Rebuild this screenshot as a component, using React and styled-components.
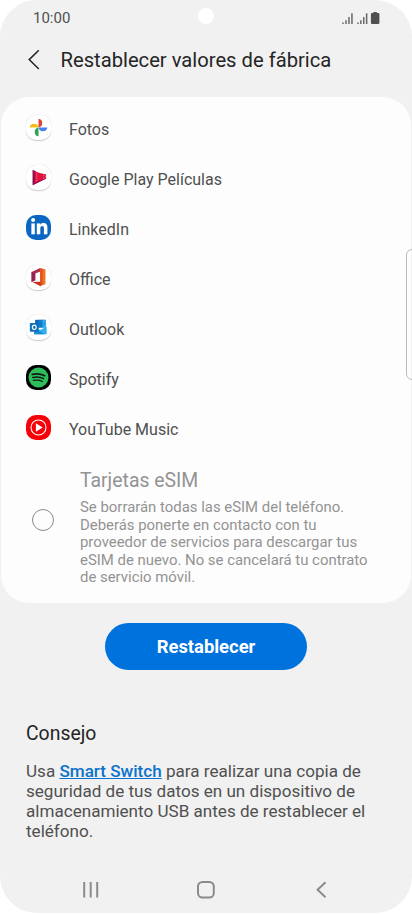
import styled, {createGlobalStyle} from 'styled-components';
import {FaLinkedinIn} from 'react-icons/fa';

const apps = [
    {name: 'Fotos', Icon: PhotosIcon, bg: '#fff'},
    {name: 'Google Play Películas', Icon: MoviesIcon, bg: '#fff'},
    {name: 'LinkedIn', Icon: LinkedInIcon, bg: '#0b66c2'},
    {name: 'Office', Icon: OfficeIcon, bg: '#fff'},
    {name: 'Outlook', Icon: OutlookIcon, bg: '#fff'},
    {name: 'Spotify', Icon: SpotifyIcon, bg: '#000'},
    {name: 'YouTube Music', Icon: YoutubeMusicIcon, bg: '#f80008'},
];

export default function App() {
    return (
        <>
            <GlobalStyle />
            <Phone>
                <StatusBar>
                    <Time>10:00</Time>
                    <Camera />
                    <StatusIcons />
                </StatusBar>

                <Header>
                    <BackButton aria-label='Atrás'>
                        <svg width='14' height='22' viewBox='0 0 14 22'>
                            <path
                                d='M11.8 1.2 L2.2 10.6 L11.8 20'
                                fill='none'
                                stroke='#252525'
                                strokeWidth='1.5'
                            />
                        </svg>
                    </BackButton>
                    <Title>Restablecer valores de fábrica</Title>
                </Header>

                <Card>
                    <AppList>
                        {apps.map(({name, Icon, bg}) => (
                            <AppRow key={name}>
                                <AppIcon $bg={bg}>
                                    <Icon />
                                </AppIcon>
                                <AppName>{name}</AppName>
                            </AppRow>
                        ))}
                    </AppList>
                    <EsimRow>
                        <Radio type='radio' aria-label='Tarjetas eSIM' />
                        <EsimText>
                            <EsimTitle>Tarjetas eSIM</EsimTitle>
                            <EsimDescription>
                                Se borrarán todas las eSIM del teléfono.
                                <br />
                                Deberás ponerte en contacto con tu
                                <br />
                                proveedor de servicios para descargar tus
                                <br />
                                eSIM de nuevo. No se cancelará tu contrato
                                <br />
                                de servicio móvil.
                            </EsimDescription>
                        </EsimText>
                    </EsimRow>
                </Card>

                <ResetButton>Restablecer</ResetButton>

                <Tip>
                    <TipTitle>Consejo</TipTitle>
                    <TipText>
                        Usa <TipLink>Smart Switch</TipLink> para realizar una
                        copia de
                        <br />
                        seguridad de tus datos en un dispositivo de
                        <br />
                        almacenamiento USB antes de restablecer el
                        <br />
                        teléfono.
                    </TipText>
                </Tip>

                <NavBar>
                    <NavIcon>
                        <path d='M3.2 2v15.6M9.7 2v15.6M16.2 2v15.6' />
                    </NavIcon>
                    <NavIcon>
                        <rect x='2' y='2' width='15.8' height='15.6' rx='4.5' />
                    </NavIcon>
                    <NavIcon>
                        <path d='M14.5 2.3 L6.6 9.8 L14.5 17.3' />
                    </NavIcon>
                </NavBar>

                <EdgeHandle />
            </Phone>
        </>
    );
}

function StatusIcons() {
    return (
        <svg width='38' height='13' viewBox='0 0 38 13'>
            <g fill='#505050'>
                <path
                    d='M.2 10.5h1.5V12H.2zM3.2 8.2h1.5V12H3.2zM6.2 5h1.5v7H6.2zM9.2 1.3h1.5V12H9.2z'
                    opacity='.85'
                />
                <path
                    d='M15.2 10.5h1.5V12h-1.5zM18.1 8.2h1.5V12h-1.5zM21 5h1.5v7H21zM23.9 1.3h1.5V12h-1.5z'
                    opacity='.85'
                />
                <path d='M31.4 0h3.4v1h1.4q1.2 0 1.2 1.2v8.6q0 1.2-1.2 1.2h-6.1q-1.2 0-1.2-1.2V2.2q0-1.2 1.2-1.2h1.3z' />
            </g>
        </svg>
    );
}

function PhotosIcon() {
    return (
        <Logo>
            <path d='M13 3.8a4.6 4.6 0 0 1 0 9.1z' fill='#e24537' />
            <path d='M22.2 13a4.6 4.6 0 0 1-9.1 0z' fill='#4780ed' />
            <path d='M13 22.2a4.6 4.6 0 0 1 0-9.1z' fill='#2fa456' />
            <path d='M3.8 12.9a4.6 4.6 0 0 1 9.1 0z' fill='#f6bd18' />
        </Logo>
    );
}

function MoviesIcon() {
    return (
        <Logo>
            <path d='M6.8 5v16l3.2-1.6V6.2z' fill='#880e4f' />
            <path d='M9 6.2q4.5 2.4 12.2 3.6l-.8 2.2.8 2L9 20z' fill='#e0103f' />
            <path d='M6.8 21l14.2-7q-7.5 2-11.4 4.8z' fill='#8c1450' />
            <path
                d='M11.2 8.7v8.5M18.4 10.5v3.8'
                stroke='#f8a5b8'
                strokeWidth='.9'
                strokeDasharray='1 1.3'
            />
        </Logo>
    );
}

function LinkedInIcon() {
    return (
        <FaLinkedinIn size={18.5} color='#fff' stroke='#fff' strokeWidth='4' />
    );
}

function OfficeIcon() {
    return (
        <Logo>
            <path d='M14.8 3l-9 4.4v10.2l3.8-1.7V8.8l6-2.4z' fill='#b3294b' />
            <path d='M5.8 7.4l3.8 1.4v7.1l-3.8 1.7z' fill='#922454' />
            <path d='M14.6 3l5.4 1.8v15L14.6 22z' fill='#e65319' />
            <path d='M17.4 3.9l2.6.9v15l-2.6 1z' fill='#f17528' />
            <path d='M6.6 17.8l8-.3 .6.2V22z' fill='#c82e1c' />
        </Logo>
    );
}

function OutlookIcon() {
    return (
        <Logo>
            <path d='M9.5 5h11v8h-11z' fill='#0a67b7' />
            <path d='M13 5h4v4h-4z' fill='#167fcc' />
            <path d='M17 5h3.5v4H17z' fill='#32a9e7' />
            <path d='M13 9h4v4h-4z' fill='#0a7dce' />
            <path d='M17 9h3.5v4H17z' fill='#28a8ea' />
            <path d='M8.5 12.6l6.2 2.9 6.8-3.4v7.9h-13z' fill='#2fb0ed' />
            <path d='M8.5 20v-6.5l11 6.5z' fill='#198ad0' />
            <rect x='4' y='8.2' width='9.2' height='9.2' rx='.9' fill='#0f6fbd' />
            <ellipse
                cx='8.6'
                cy='12.8'
                rx='2'
                ry='2.3'
                fill='none'
                stroke='#fff'
                strokeWidth='1.2'
            />
        </Logo>
    );
}

function SpotifyIcon() {
    return (
        <Logo>
            <circle cx='13' cy='13' r='10.4' fill='#2ebd5b' />
            <g fill='none' stroke='#101c14' strokeLinecap='round'>
                <path d='M6.5 9.8q6.8-1.8 13 1.3' strokeWidth='1.8' />
                <path d='M7.1 13q6-1.5 11.2 1.2' strokeWidth='1.5' />
                <path d='M7.7 16q5.1-1.1 9.4 1.1' strokeWidth='1.3' />
            </g>
        </Logo>
    );
}

function YoutubeMusicIcon() {
    return (
        <Logo>
            <circle
                cx='13'
                cy='13'
                r='7.8'
                fill='none'
                stroke='#fff'
                strokeWidth='1.1'
            />
            <path d='M10.3 8.6v8.8l7-4.4z' fill='#fff' />
        </Logo>
    );
}

const GlobalStyle = createGlobalStyle`
    * {
        box-sizing: border-box;
    }

    body {
        margin: 0;
        background: #fff;
        font-family: Roboto, 'Liberation Sans', sans-serif;
    }
`;

const Phone = styled.main`
    position: relative;
    display: flex;
    flex-direction: column;
    width: 412px;
    height: 913px;
    padding: 0 1px;
    overflow: hidden;
    border-radius: 37px;
    background: #f1f1f1;
`;

const StatusBar = styled.div`
    display: grid;
    grid-template-columns: 1fr 16px 1fr;
    align-items: center;
    height: 36px;
    padding: 0 31px 0 32px;

    svg {
        justify-self: end;
    }
`;

const Time = styled.span`
    font-size: 15px;
    color: #505050;
`;

const Camera = styled.span`
    width: 16px;
    height: 16px;
    margin: -4px 0 0 -1px;
    border-radius: 50%;
    background: #fff;
`;

const Header = styled.header`
    display: flex;
    align-items: center;
    height: 61px;
    padding: 0 0 14px 26px;
`;

const BackButton = styled.button`
    display: flex;
    width: 33.5px;
    padding: 0;
    border: 0;
    background: none;
`;

const Title = styled.h1`
    margin: 0;
    font-size: 20.2px;
    font-weight: 400;
    color: #252525;
`;

const Card = styled.section`
    height: 506px;
    padding-top: 7px;
    border-radius: 28px;
    background: #fdfdfd;
`;

const AppList = styled.ul`
    margin: 0;
    padding: 0;
    list-style: none;
`;

const AppRow = styled.li`
    display: flex;
    align-items: center;
    gap: 17px;
    height: 50px;
    padding-left: 25px;
`;

const AppIcon = styled.span`
    display: flex;
    align-items: center;
    justify-content: center;
    width: 25px;
    height: 25px;
    margin: 0 0.6px 3px 0.4px;
    border-radius: 10px;
    background: ${({$bg}) => $bg};
    box-shadow: ${({$bg}) => ($bg === '#fff' ? '0 0.5px 1px #0003' : 'none')};
`;

const Logo = styled.svg.attrs({viewBox: '0 0 26 26'})`
    width: 25px;
    height: 25px;
`;

const AppName = styled.span`
    font-size: 16px;
    color: #505050;
`;

const EsimRow = styled.label`
    display: flex;
    align-items: center;
    gap: 25px;
    padding: 14px 0 0 30.5px;
`;

const Radio = styled.input`
    appearance: none;
    width: 22.5px;
    height: 22.5px;
    margin: 0 1px 15px 0;
    border: 1px solid #8c8c8c;
    border-radius: 50%;
`;

const EsimText = styled.div`
    display: flex;
    flex-direction: column;
`;

const EsimTitle = styled.span`
    padding-top: 1px;
    font-size: 19.4px;
    line-height: 24px;
    color: #939393;
`;

const EsimDescription = styled.p`
    margin: 6px 0 0;
    font-size: 14.92px;
    line-height: 17.5px;
    white-space: nowrap;
    color: #939393;
`;

const ResetButton = styled.button`
    align-self: center;
    width: 202px;
    height: 47px;
    margin-top: 20px;
    padding: 0;
    border: 0;
    border-radius: 24px;
    background: #0072de;
    font-family: inherit;
    font-size: 18.4px;
    font-weight: 700;
    color: #fff;
`;

const Tip = styled.section`
    margin: 52px 0 0 25px;
`;

const TipTitle = styled.h2`
    margin: 0;
    font-size: 19.4px;
    font-weight: 400;
    line-height: 24px;
    color: #252525;
`;

const TipText = styled.p`
    margin: 15px 0 0;
    font-size: 17.08px;
    line-height: 20.1px;
    white-space: nowrap;
    color: #505050;
`;

const TipLink = styled.a`
    font-weight: 500;
    text-decoration: underline;
    color: #0b73cc;
`;

const NavBar = styled.nav`
    display: flex;
    justify-content: space-between;
    margin-top: auto;
    padding: 0 80px 13px;
`;

const NavIcon = styled.svg.attrs({viewBox: '0 0 20 20'})`
    width: 20px;
    height: 20px;
    fill: none;
    stroke: #8b8b8b;
    stroke-width: 2;
`;

const EdgeHandle = styled.span`
    position: absolute;
    top: 249px;
    right: -6px;
    width: 12px;
    height: 131px;
    border: 1.5px solid #bababa;
    border-radius: 6px;
`;
